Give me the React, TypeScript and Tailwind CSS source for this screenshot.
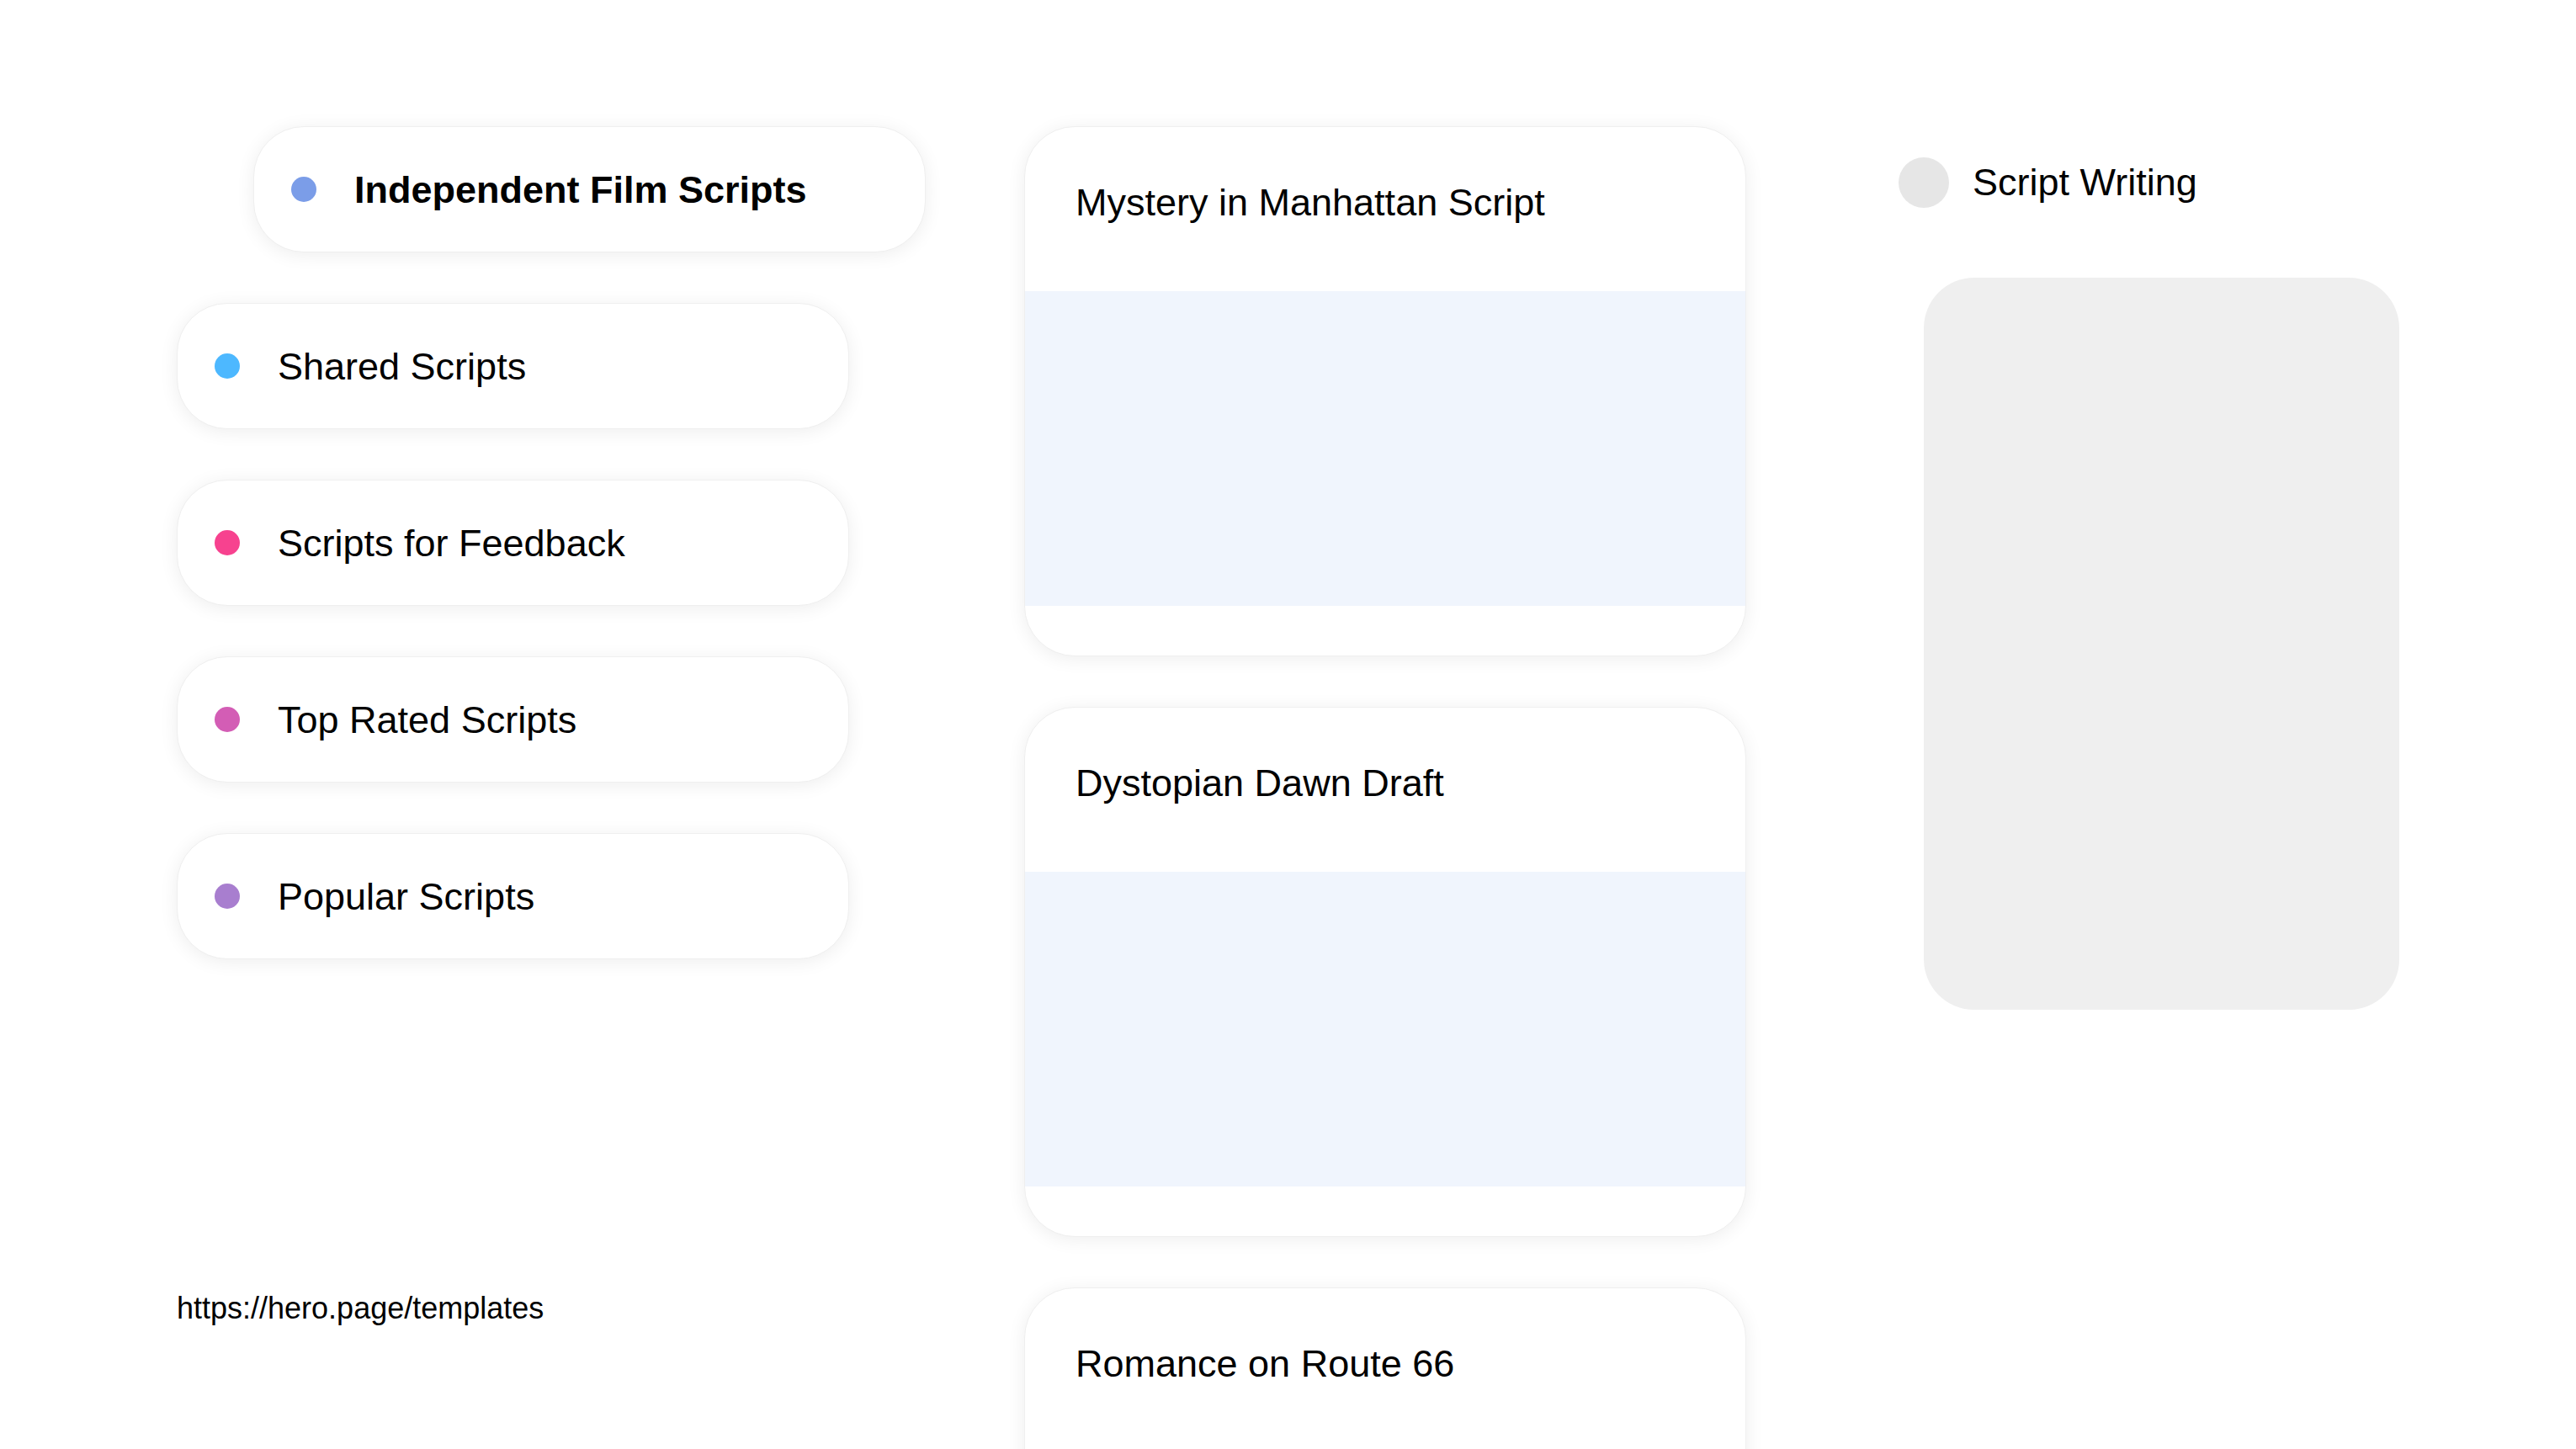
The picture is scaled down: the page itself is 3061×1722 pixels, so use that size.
const collections = [
  { name: "Independent Film Scripts", dot: "bg-[#7b9de8]", active: true },
  { name: "Shared Scripts", dot: "bg-[#4db8ff]" },
  { name: "Scripts for Feedback", dot: "bg-[#f7428f]" },
  { name: "Top Rated Scripts", dot: "bg-[#d35db5]" },
  { name: "Popular Scripts", dot: "bg-[#a87ecf]" },
];

const scripts = ["Mystery in Manhattan Script", "Dystopian Dawn Draft", "Romance on Route 66"];

function Pill({ name, dot, active }: { name: string; dot: string; active?: boolean }) {
  return (
    <div
      className={`flex items-center h-[150px] w-[799px] rounded-[60px] bg-white border border-[#efefef] shadow-[0_3px_22px_rgba(0,0,0,0.07)] pl-[44px] ${
        active ? "ml-[91px]" : ""
      }`}
    >
      <span className={`w-[30px] h-[30px] rounded-full shrink-0 ${dot}`}></span>
      <span className={`ml-[45px] text-[45px] text-black leading-none ${active ? "font-bold" : "font-normal"}`}>
        {name}
      </span>
    </div>
  );
}

function ScriptCard({ title }: { title: string }) {
  return (
    <div className="w-[858px] h-[630px] shrink-0 rounded-[60px] bg-white border border-[#efefef] shadow-[0_3px_22px_rgba(0,0,0,0.07)] overflow-hidden flex flex-col">
      <div className="h-[195px] px-[60px] pt-[56px] text-[45px] text-black">{title}</div>
      <div className="h-[374px] bg-[#f0f5fd]"></div>
    </div>
  );
}

export default function App() {
  return (
    <div
      className="w-full h-[1722px] bg-white overflow-hidden flex pl-[210px] pt-[150px]"
      style={{ fontFamily: '"Liberation Sans", Arial, sans-serif' }}
    >
      {/* collections */}
      <div className="w-[897px] shrink-0 flex flex-col">
        <div className="flex flex-col gap-[60px]">
          {collections.map((c) => (
            <Pill key={c.name} name={c.name} dot={c.dot} active={c.active} />
          ))}
        </div>
        <div className="mt-[388px] text-[36px] text-black">https://hero.page/templates</div>
      </div>

      {/* scripts */}
      <div className="ml-[110px] w-[858px] shrink-0 flex flex-col gap-[60px]">
        {scripts.map((s) => (
          <ScriptCard key={s} title={s} />
        ))}
      </div>

      {/* category */}
      <div className="ml-[181px] shrink-0 flex flex-col">
        <div className="flex items-center mt-[33px]">
          <span className="w-[60px] h-[60px] rounded-full bg-[#e6e6e6]"></span>
          <span className="ml-[28px] text-[45px] text-black">Script Writing</span>
        </div>
        <div className="ml-[30px] mt-[79px] w-[565px] h-[870px] rounded-[60px] bg-[#efefef]"></div>
      </div>
    </div>
  );
}
